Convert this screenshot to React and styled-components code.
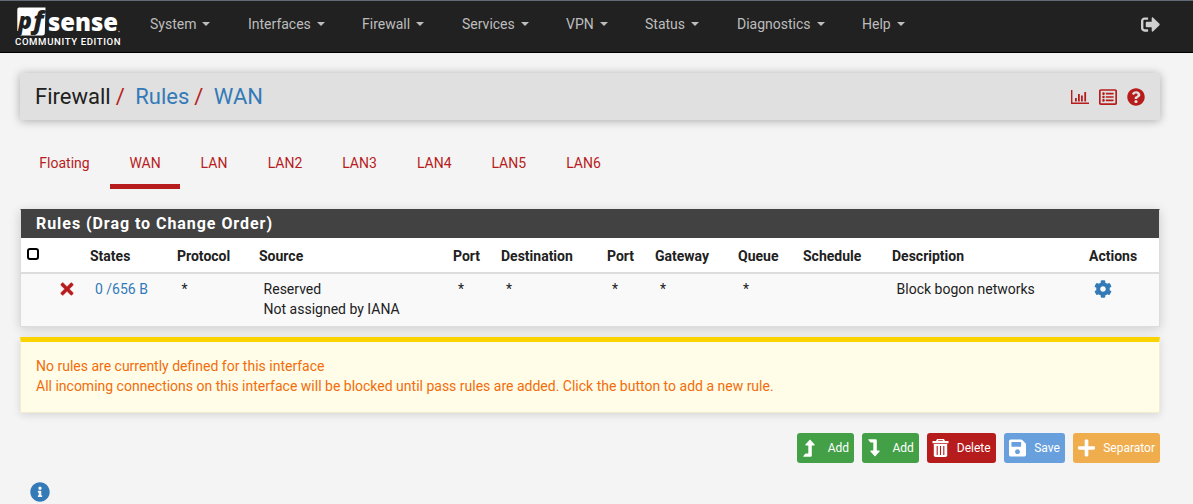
import React from "react";
import styled, { createGlobalStyle } from "styled-components";
import {
  FaSignOutAlt, FaRegListAlt, FaQuestionCircle, FaTimes, FaCog,
  FaSave, FaPlus, FaInfoCircle,
} from "react-icons/fa";

const GlobalStyle = createGlobalStyle`
  * { box-sizing: border-box; }
  html, body { margin: 0; height: 504px; overflow: hidden; }
  body {
    background: #f4f4f4; color: #212121;
    font: 400 14px/20px Roboto, "Liberation Sans", sans-serif;
  }
`;

const NavBar = styled.nav`
  display: flex;
  align-items: center;
  height: 53px;
  padding: 0 33px 5px 14px;
  background: #212121;
  border-top: 1px solid #626b76;
  border-bottom: 1px solid #000;
  color: #bdbdbd;
`;
const Logo = styled.svg`
  width: 108px;
  height: 42px;
  margin-top: 5px;
  flex: none;
  overflow: visible;
`;
const Menu = styled.div`
  display: flex;
  flex: 1;
  margin-left: 28px;
`;
const MenuItem = styled.span`
  display: flex;
  align-items: center;
  flex: none;
  width: ${(p) => p.$width}px;
  &::after {
    content: "";
    margin-left: 6px;
    border: 4px solid transparent;
    border-top-color: currentColor;
    border-bottom: 0;
  }
`;
const Logout = styled(FaSignOutAlt)`
  width: 19px;
  height: 19px;
  color: #cfcfcf;
`;

const Page = styled.main`
  padding: 20px 33px 0 20px;
`;
const Header = styled.header`
  display: flex;
  justify-content: space-between;
  align-items: center;
  height: 47px;
  padding: 0 15px;
  background: #e0e0e0;
  border-radius: 2px;
  box-shadow: 0 1px 10px rgba(0, 0, 0, 0.3);
`;
const Crumbs = styled.div`
  display: flex;
  font-size: 22px;
  line-height: 30px;
`;
const Crumb = styled.span`
  color: ${(p) => (p.$link ? "#337ab7" : "#212121")};
  &:not(:first-child)::before {
    content: "/";
    padding: 0 10.5px 0 5px;
    color: #b71c1c;
  }
`;
const HeaderIcons = styled.div`
  display: flex;
  align-items: center;
  gap: 10px;
  color: #b71c1c;
  svg { width: 18px; height: 18px; }
`;

const Tabs = styled.div`
  display: flex;
  height: 52px;
  margin: 17px 0 20px;
`;
const Tab = styled.a`
  flex: none;
  width: ${(p) => p.$width}px;
  padding-top: 16px;
  text-align: center;
  color: #b71c1c;
  border-bottom: 5px solid ${(p) => (p.$active ? "#b71c1c" : "transparent")};
  &:first-child { padding-right: 1px; }
`;

const Panel = styled.section`
  height: 118px;
  border: 1px solid #ddd;
  border-top-color: #424242;
  background: #fff;
  box-shadow: 0 2px 10px rgba(0, 0, 0, 0.16);
`;
const PanelTitle = styled.h2`
  height: 28px;
  margin: 0;
  padding: 0 15px;
  background: #424242;
  color: #fff;
  font-size: 16px;
  font-weight: 700;
  line-height: 28px;
  letter-spacing: 0.95px;
`;
const Table = styled.table`
  width: 100%;
  table-layout: fixed;
  border-collapse: separate;
  border-spacing: 0;
  text-align: left;
`;
const HeadCell = styled.th`
  height: 36px;
  padding: 2px 0 0 5px;
  border-bottom: 2px solid #ddd;
  font-weight: 700;
  white-space: nowrap;
`;
const Cell = styled.td`
  height: 52px;
  padding: 5px 0 0 ${(p) => p.$pad ?? 9.6}px;
  background: #f9f9f9;
  vertical-align: top;
  white-space: nowrap;
  color: ${(p) => (p.$link ? "#337ab7" : "inherit")};
`;
const Check = styled.input`
  display: block;
  appearance: none;
  width: 12px;
  height: 12px;
  margin: -4px 0 0 0.5px;
  border: 2px solid #000;
  border-radius: 3px;
  background: #fff;
`;
const Block = styled(FaTimes)`
  display: block;
  width: 16px;
  height: 18px;
  margin-top: 1px;
  color: #b71c1c;
  stroke: currentColor;
  stroke-width: 14;
`;
const Gear = styled(FaCog)`
  display: block;
  width: 18px;
  height: 18px;
  margin-top: 1px;
  color: #337ab7;
`;

const Notice = styled.div`
  height: 76px;
  margin-top: 10px;
  padding: 14px 15px;
  border: 1px solid #f3edcf;
  border-top: 5px solid #fbd400;
  background: #fffde7;
  color: #f26c0c;
  box-shadow: 0 2px 8px rgba(0, 0, 0, 0.12);
`;
const Actions = styled.div`
  display: flex;
  justify-content: flex-end;
  gap: 8.2px;
  margin-top: 20px;
`;
const Button = styled.button`
  display: flex;
  align-items: center;
  justify-content: space-between;
  width: ${(p) => p.$width}px;
  height: 30px;
  padding: 0 5px;
  border: 0;
  border-radius: 3px;
  background: ${(p) => p.$color};
  color: #fff;
  font: 400 12px Roboto, "Liberation Sans", sans-serif;
  svg { width: ${(p) => p.$icon ?? 17}px; height: 20px; flex: none; }
`;
const Info = styled(FaInfoCircle)`
  display: block;
  width: 20px;
  height: 20px;
  margin: 19px 0 0 10px;
  color: #337ab7;
`;

const menu = [["System", 98], ["Interfaces", 114], ["Firewall", 100], ["Services", 104], ["VPN", 79], ["Status", 92], ["Diagnostics", 125], ["Help", 60]];
const tabs = [["Floating", 90], ["WAN", 70], ["LAN", 68], ["LAN2", 74], ["LAN3", 75], ["LAN4", 74.5], ["LAN5", 74.5], ["LAN6", 75]];
const widths = [35, 29, 87, 82, 194, 48, 106, 48, 83, 65, 89, 197, 75];
const heads = ["States", "Protocol", "Source", "Port", "Destination", "Port", "Gateway", "Queue", "Schedule", "Description", "Actions"];

const PfLogo = () => (
  <Logo viewBox="0 0 108 42" fill="#fff" fontFamily='"Open Sans", sans-serif'>
    <path d="M5 1.5H31.5L30.8 27Q30.7 29.5 28 29.5H6.5L7.3 25H3.3V3.5Q3.3 1.5 5 1.5Z" />
    <text x="4" y="23" fontSize="23" fontWeight="800" fontStyle="italic" fill="#212121">p</text>
    <text x="0" y="23" fontSize="24" fontWeight="800" fontStyle="italic" fill="#212121" transform="translate(19.2 0) scale(1.05 1)">f</text>
    <text x="34" y="24.6" fontSize="24" fontWeight="800" textLength="70" lengthAdjust="spacingAndGlyphs">sense</text>
    <circle cx="105" cy="25.5" r="0.8" opacity=".6" />
    <text x="1" y="39.2" fontFamily="Roboto, sans-serif" fontSize="9.6" fontWeight="500" letterSpacing=".62">COMMUNITY EDITION</text>
  </Logo>
);
const ChartIcon = () => (
  <svg viewBox="0 0 18 18" fill="currentColor">
    <path d="M0 2h1.4v12.6H18V16H0zM4 10h1.8v3.5H4zM7 6h1.8v7.5H7zM10 7.5h1.8v6H10zM13.3 4h1.8v9.5h-1.8z" />
  </svg>
);
const TrashIcon = () => (
  <svg viewBox="0 0 17 20">
    <path fill="#fff" fillRule="evenodd" d="M5 1h7l1 2h3.5v2.2H.5V3H4zM6.4 2.2 6 3h5l-.4-.8z" />
    <path fill="#fff" d="M1.8 6h13.4v11.2q0 1.8-1.8 1.8H3.6q-1.8 0-1.8-1.8z" />
    <path stroke="#b71c1c" strokeWidth="1.1" d="M5.2 8v9M8.5 8v9M11.8 8v9" />
  </svg>
);
const LevelIcon = ({ down }) => (
  <svg viewBox="0 0 13 20" fill="currentColor">
    <path
      transform={down ? "matrix(1 0 0 -1 0 20)" : undefined}
      d="M8 1.5 12.6 6.6q.4.9-.6.9H9.8v10q0 1.2-1.2 1.2H1.7q-.8 0-.3-.7L3 15.9q.3-.4.8-.4h2.5v-8H4q-1 0-.6-.9z"
    />
  </svg>
);

export default function App() {
  return (
    <>
      <GlobalStyle />
      <NavBar>
        <PfLogo />
        <Menu>
          {menu.map(([label, w]) => <MenuItem key={label} $width={w}>{label}</MenuItem>)}
        </Menu>
        <Logout />
      </NavBar>
      <Page>
        <Header>
          <Crumbs>
            <Crumb>Firewall</Crumb>
            <Crumb $link>Rules</Crumb>
            <Crumb $link>WAN</Crumb>
          </Crumbs>
          <HeaderIcons><ChartIcon /><FaRegListAlt /><FaQuestionCircle /></HeaderIcons>
        </Header>
        <Tabs>
          {tabs.map(([label, w]) => <Tab key={label} $width={w} $active={label === "WAN"}>{label}</Tab>)}
        </Tabs>
        <Panel>
          <PanelTitle>Rules (Drag to Change Order)</PanelTitle>
          <Table>
            <colgroup>{widths.map((w, i) => <col key={i} width={w} />)}</colgroup>
            <thead>
              <tr>
                <HeadCell><Check type="checkbox" /></HeadCell>
                <HeadCell />
                {heads.map((h, i) => <HeadCell key={i}>{h}</HeadCell>)}
              </tr>
            </thead>
            <tbody>
              <tr>
                <Cell />
                <Cell $pad={3}><Block /></Cell>
                <Cell $link $pad={10}>0 /656 B</Cell>
                <Cell>*</Cell>
                <Cell>Reserved<br />Not assigned by IANA</Cell>
                <Cell $pad={10}>*</Cell>
                <Cell $pad={10}>*</Cell>
                <Cell $pad={10}>*</Cell>
                <Cell $pad={10}>*</Cell>
                <Cell $pad={10}>*</Cell>
                <Cell />
                <Cell>Block bogon networks</Cell>
                <Cell><Gear /></Cell>
              </tr>
            </tbody>
          </Table>
        </Panel>
        <Notice>
          No rules are currently defined for this interface<br />
          All incoming connections on this interface will be blocked until pass rules are added. Click the button to add a new rule.
        </Notice>
        <Actions>
          <Button $color="#43a047" $width={56.6} $icon={13}><LevelIcon />Add</Button>
          <Button $color="#43a047" $width={56.6} $icon={13}><LevelIcon down />Add</Button>
          <Button $color="#b71c1c" $width={68.6}><TrashIcon />Delete</Button>
          <Button $color="#67a0dc" $width={61}><FaSave />Save</Button>
          <Button $color="#f0ad4e" $width={87}><FaPlus />Separator</Button>
        </Actions>
        <Info />
      </Page>
    </>
  );
}
